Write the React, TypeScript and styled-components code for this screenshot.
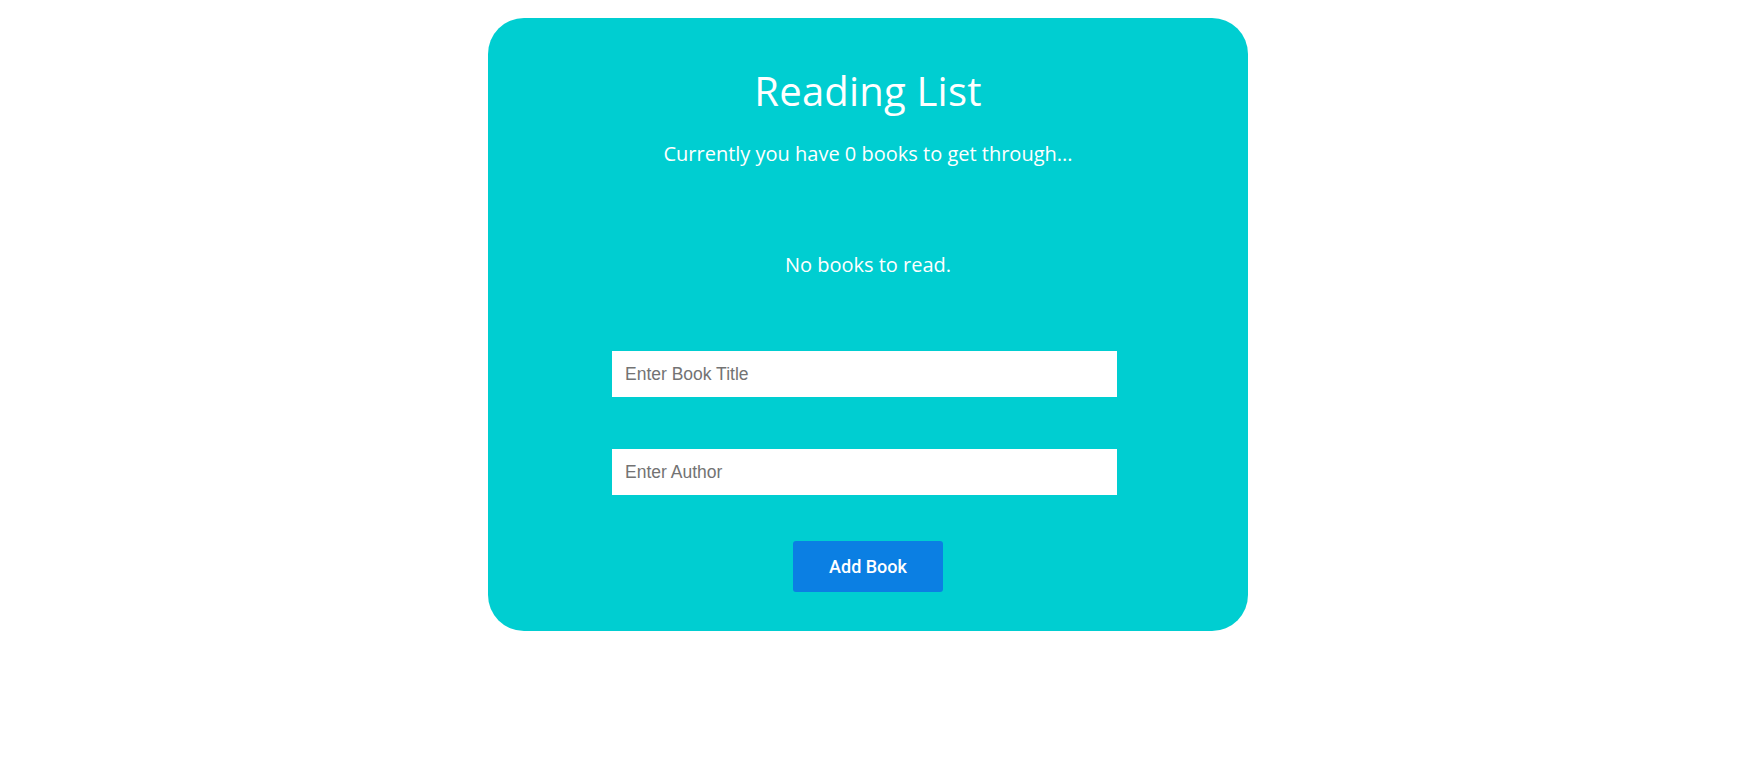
import { useState } from 'react';
import styled, { createGlobalStyle } from 'styled-components';

//== global ==//
const GlobalStyle = createGlobalStyle`
    body {
        margin: 0;
        background: #ffffff;
        font-family: "Open Sans", "Liberation Sans", sans-serif;
    }
`;

//== style ==//
const Page = styled.div`
    display: flex;
    justify-content: center;
    padding: 18px 10px 0 0;
`;

const Card = styled.section`
    width: 760px;
    box-sizing: border-box;
    background-color: #00ced1;
    border-radius: 36px;
    padding: 46px 0 39px;
    display: flex;
    flex-direction: column;
    align-items: center;
    color: #ffffff;
`;

const Title = styled.h1`
    margin: 0;
    font-size: 40px;
    line-height: 54px;
    font-weight: 400;
    letter-spacing: 0.2px;
`;

const Note = styled.p<{ gap: number }>`
    margin: ${props => props.gap}px 0 0;
    font-size: 20px;
    line-height: 27px;
    font-weight: 400;
`;

const Form = styled.form`
    margin-top: 73px;
    width: 100%;
    display: flex;
    flex-direction: column;
    align-items: center;
`;

const Field = styled.input`
    align-self: flex-start;
    margin-left: 124px;
    width: 505px;
    height: 46px;
    box-sizing: border-box;
    border: none;
    outline: none;
    padding: 0 13px;
    font-family: "Liberation Sans", Arial, sans-serif;
    font-size: 17.5px;
    color: #333;
    background: #ffffff;

    & + & {
        margin-top: 52px;
    }

    &::placeholder {
        color: #737373;
    }
`;

const Button = styled.button`
    margin-top: 46px;
    width: 150px;
    height: 51px;
    border: none;
    border-radius: 3px;
    background-color: #0b7fe3;
    color: #ffffff;
    font-family: Roboto, "Liberation Sans", sans-serif;
    font-size: 18px;
    font-weight: 500;
    cursor: pointer;
`;

//== component ==//
export default function App() {
    const [books, setBooks] = useState<{ title: string; author: string }[]>([]);
    const [title, setTitle] = useState('');
    const [author, setAuthor] = useState('');

    const addBook = (e: React.FormEvent) => {
        e.preventDefault();
        if (!title) return;
        setBooks([...books, { title, author }]);
        setTitle('');
        setAuthor('');
    };

    return (
        <>
            <GlobalStyle />
            <Page>
                <Card>
                    <Title>Reading List</Title>
                    <Note gap={22}>Currently you have {books.length} books to get through...</Note>
                    {books.length === 0
                        ? <Note gap={84}>No books to read.</Note>
                        : books.map((b, i) => <Note key={i} gap={i === 0 ? 84 : 8}>{b.title} — {b.author}</Note>)}
                    <Form onSubmit={addBook}>
                        <Field placeholder="Enter Book Title" value={title} onChange={e => setTitle(e.target.value)} />
                        <Field placeholder="Enter Author" value={author} onChange={e => setAuthor(e.target.value)} />
                        <Button type="submit">Add Book</Button>
                    </Form>
                </Card>
            </Page>
        </>
    );
}
